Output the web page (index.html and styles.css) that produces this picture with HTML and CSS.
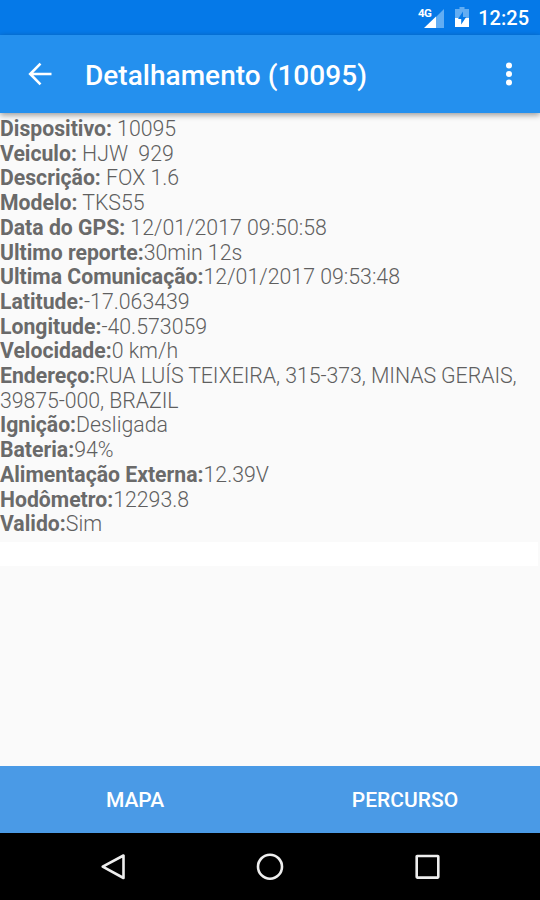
FILE: index.html
```html
<!DOCTYPE html>
<html lang="pt-BR">
<head>
<meta charset="utf-8">
<title>Detalhamento</title>
<link rel="stylesheet" href="styles.css">
</head>
<body>
<div class="status">
<svg class="signal" width="28" height="24" viewBox="0 0 28 24"><path fill="#62adf3" d="M26 3V22H18V11z"/><path fill="#fff" d="M18 10.500V22H6z"/><text class="network" x="0" y="11">4G</text></svg>
<svg class="battery" width="14" height="20" viewBox="0 0 14 20"><path fill="#62adf3" d="M4.500 0h5v2H14v9H0V2h4.500z"/><path fill="#fff" d="M0 11h14v9H0z"/><path fill="#0579e8" d="M8 4.500 3 12h3.200v5.500L11.200 10H8z"/></svg>
<span class="time">12:25</span>
</div>
<header class="bar">
<svg class="back" width="24" height="24" viewBox="0 0 24 24"><path d="M24.500 12H3.500M13.500 1.700L3.200 12l10.300 10.300" fill="none" stroke="#fff" stroke-width="2.600"/></svg>
<h1>Detalhamento (10095)</h1>
<svg class="more" width="8" height="24" viewBox="0 0 8 24" fill="#fff"><circle cx="4" cy="3.500" r="3"/><circle cx="4" cy="12" r="3"/><circle cx="4" cy="20.500" r="3"/></svg>
</header>
<main>
<p><b>Dispositivo:</b> 10095</p>
<p><b>Veiculo:</b> HJW&nbsp; 929</p>
<p><b>Descrição:</b> FOX 1.6</p>
<p><b>Modelo:</b> TKS55</p>
<p><b>Data do GPS:</b> 12/01/2017 09:50:58</p>
<p><b>Ultimo reporte:</b>30min 12s</p>
<p><b>Ultima Comunicação:</b>12/01/2017 09:53:48</p>
<p><b>Latitude:</b>-17.063439</p>
<p><b>Longitude:</b>-40.573059</p>
<p><b>Velocidade:</b>0 km/h</p>
<p><b>Endereço:</b><span class="address">RUA LUÍS TEIXEIRA, 315-373, MINAS GERAIS,<br>39875-000, BRAZIL</span></p>
<p><b>Ignição:</b>Desligada</p>
<p><b>Bateria:</b>94%</p>
<p><b>Alimentação Externa:</b>12.39V</p>
<p><b>Hodômetro:</b>12293.8</p>
<p><b>Valido:</b>Sim</p>
<div class="blank"></div>
</main>
<div class="actions"><span>MAPA</span><span>PERCURSO</span></div>
<nav>
<svg width="28" height="28" viewBox="0 0 28 28"><path d="M24.500 2.500v22.500L3.700 13.700z"/></svg>
<svg width="28" height="28" viewBox="0 0 28 28"><circle cx="14" cy="13.700" r="12"/></svg>
<svg width="28" height="28" viewBox="0 0 28 28"><rect x="3.700" y="3" width="21.600" height="21.600" rx=".5"/></svg>
</nav>
</body>
</html>
```
FILE: styles.css
```css
*{box-sizing:border-box}
body{margin:0;width:540px;height:900px;display:flex;flex-direction:column;font-family:Roboto,sans-serif;background:#fafafa;overflow:hidden}
.status{height:35px;background:#0579e8;display:flex;align-items:center;justify-content:flex-end;color:#fff;padding:1px 11px 0 0}
.signal{margin-right:9px}
.battery{margin:0 9px 2px 0}
.network{font-size:11.5px;font-weight:700;fill:#fff;letter-spacing:-.6px}
.time{font-size:20px;font-weight:500}
.bar{position:relative;height:78px;background:#2490ee;display:flex;align-items:center;padding:0 27px;color:#fff;box-shadow:0 2px 6px rgba(0,0,0,.4)}
h1{margin:3px auto 0 34px;font-size:28px;font-weight:500;letter-spacing:.03px}
main{flex:1;padding-top:4px;color:#5f5f5f;font-size:21.3px;font-weight:300}
p{margin:0;line-height:24.7px;white-space:nowrap}
b{font-weight:700;color:#6a6a6a;font-size:21.2px}
.address{letter-spacing:-.06px}
.blank{height:24px;width:538px;margin-top:5px;background:#fff}
.actions{height:67px;background:#4a9ae6;display:grid;grid-template-columns:1fr 1fr;place-items:center;color:#fff;font-size:21px;font-weight:500}
nav{height:67px;background:#000;display:flex;align-items:center;justify-content:space-between;padding:0 99px}
nav svg{fill:none;stroke:#eee;stroke-width:2.6;stroke-linejoin:round}
.back{overflow:visible}
```
